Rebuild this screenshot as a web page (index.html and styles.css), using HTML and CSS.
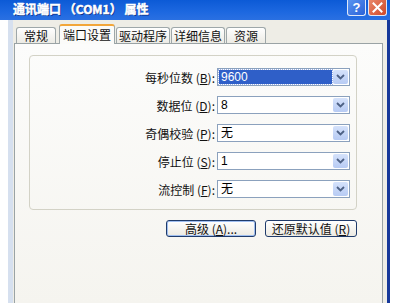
FILE: index.html
```html
<!DOCTYPE html>
<html>
<head>
<meta charset="utf-8">
<link rel="stylesheet" href="styles.css">
</head>
<body>
<div class="titlebar">
  <span class="title">通讯端口 （COM1） 属性</span>
  <div class="tbtns">
    <span class="tb help">?</span>
    <span class="tb close"><svg width="11" height="11" viewBox="0 0 11 11"><path d="M1.5 1.5 L9.5 9.5 M9.5 1.5 L1.5 9.5" stroke="#fff" stroke-width="2" stroke-linecap="square"/></svg></span>
  </div>
</div>
<div class="frame">
  <div class="content">
    <div class="tabs">
      <span class="tab t2">常规</span>
      <span class="tab active">端口设置</span>
      <span class="tab">驱动程序</span>
      <span class="tab">详细信息</span>
      <span class="tab t2">资源</span>
    </div>
    <div class="panel">
      <div class="group">
        <div class="row"><label>每秒位数 (<u>B</u>):</label><div class="combo"><span class="val sel">9600</span><span class="drop"><svg width="9" height="6" viewBox="0 0 9 6"><path d="M1 1 L4.5 4.5 L8 1" stroke="#4d6185" stroke-width="1.8" fill="none"/></svg></span></div></div>
        <div class="row"><label>数据位 (<u>D</u>):</label><div class="combo"><span class="val">8</span><span class="drop"><svg width="9" height="6" viewBox="0 0 9 6"><path d="M1 1 L4.5 4.5 L8 1" stroke="#4d6185" stroke-width="1.8" fill="none"/></svg></span></div></div>
        <div class="row"><label>奇偶校验 (<u>P</u>):</label><div class="combo"><span class="val">无</span><span class="drop"><svg width="9" height="6" viewBox="0 0 9 6"><path d="M1 1 L4.5 4.5 L8 1" stroke="#4d6185" stroke-width="1.8" fill="none"/></svg></span></div></div>
        <div class="row"><label>停止位 (<u>S</u>):</label><div class="combo"><span class="val">1</span><span class="drop"><svg width="9" height="6" viewBox="0 0 9 6"><path d="M1 1 L4.5 4.5 L8 1" stroke="#4d6185" stroke-width="1.8" fill="none"/></svg></span></div></div>
        <div class="row"><label>流控制 (<u>F</u>):</label><div class="combo"><span class="val">无</span><span class="drop"><svg width="9" height="6" viewBox="0 0 9 6"><path d="M1 1 L4.5 4.5 L8 1" stroke="#4d6185" stroke-width="1.8" fill="none"/></svg></span></div></div>
      </div>
      <div class="buttons">
        <button class="btn adv">高级 (<u>A</u>)...</button>
        <button class="btn def">还原默认值 (<u>R</u>)</button>
      </div>
    </div>
  </div>
</div>
</body>
</html>
```
FILE: styles.css
```css
html, body {
  margin: 0;
  padding: 0;
  background: #ffffff;
  width: 397px;
  height: 303px;
  overflow: hidden;
  font-family: "Noto Sans CJK SC", "DejaVu Sans", sans-serif;
  font-size: 12px;
  color: #000;
}
.titlebar {
  width: 390px;
  height: 20px;
  background: linear-gradient(to bottom, #0c5ad6 0%, #1d68e0 60%, #2a70e2 100%);
  display: flex;
  align-items: flex-start;
  justify-content: space-between;
}
.title {
  color: #fff;
  font-weight: bold;
  font-size: 12px;
  line-height: 18px;
  margin-left: 13px;
  -webkit-text-stroke: 0.5px #fff;
  text-shadow: 1px 1px 0 #0a2c80;
}
.tbtns {
  display: flex;
  gap: 2px;
  margin-right: 3px;
}
.tb {
  width: 19px;
  height: 16px;
  box-sizing: border-box;
  border: 1px solid #dfe8f8;
  border-top: none;
  border-radius: 0 0 3px 3px;
  display: flex;
  align-items: center;
  justify-content: center;
  color: #fff;
  font-weight: bold;
  font-family: "Liberation Sans", sans-serif;
  font-size: 13px;
}
.help {
  background: linear-gradient(135deg, #5a94f0, #2a62d8);
}
.close {
  background: linear-gradient(135deg, #e9876a, #d0492a);
}
.frame {
  margin-left: 8px;
  width: 382px;
  height: 283px;
  box-sizing: border-box;
  border-left: 5px solid #d6e0ef;
  border-right: 3px solid #16389a;
  background: #eeede6;
}
.content {
  padding: 4px 4px 0 1px;
  height: 100%;
  box-sizing: border-box;
  display: flex;
  flex-direction: column;
}
.tabs {
  display: flex;
  align-items: flex-end;
  padding-left: 2px;
  height: 19px;
  position: relative;
  z-index: 1;
}
.tab {
  height: 16px;
  box-sizing: border-box;
  border: 1px solid #9ea7a9;
  border-bottom: none;
  border-radius: 3px 3px 0 0;
  background: linear-gradient(to bottom, #fff, #ecebe5);
  padding: 0 2px;
  line-height: 15px;
  font-size: 12px;
  margin-right: 1px;
  color: #111;
}
.tab.t2 { width: 40px; padding: 0 0 0 7px; }
.tab.active {
  height: 20px;
  margin-bottom: -1px;
  background: #fbfbf9;
  border-top: 2px solid #f2a63a;
  line-height: 17px;
  padding: 0 3px;
  margin-left: 2px;
}
.panel {
  flex: 1;
  border: 1px solid #9aa3a5;
  border-bottom: none;
  background: linear-gradient(to bottom, #fcfcfb, #f5f4ef);
  padding: 11px 0 0 14px;
}
.group {
  width: 328px;
  height: 155px;
  box-sizing: border-box;
  border: 1px solid #d3d2c6;
  border-radius: 4px;
  padding-top: 12px;
  display: flex;
  flex-direction: column;
  gap: 10px;
}
.row {
  display: flex;
  align-items: center;
  height: 18px;
}
.row label {
  width: 185px;
  text-align: right;
  padding-right: 2px;
  font-size: 12px;
  color: #111;
  white-space: nowrap;
}
.combo {
  width: 133px;
  height: 18px;
  box-sizing: border-box;
  border: 1px solid #8ba1bd;
  background: #fff;
  display: flex;
  align-items: center;
  padding: 1px;
}
.val {
  flex: 1;
  height: 14px;
  line-height: 14px;
  padding-left: 2px;
  font-size: 12px;
  font-family: "Liberation Sans", "Noto Sans CJK SC", sans-serif;
}
.val.sel {
  background: #2f5fc8;
  color: #fff;
  margin-right: 1px;
  outline: 1px dotted #9fb4e6;
}
.drop {
  width: 15px;
  height: 14px;
  background: linear-gradient(to bottom, #d5e2fb, #b7cbf4);
  border-radius: 2px;
  display: flex;
  align-items: center;
  justify-content: center;
}
.buttons {
  display: flex;
  gap: 9px;
  width: 328px;
  justify-content: flex-end;
  margin-top: 10px;
}
.btn {
  height: 17px;
  box-sizing: border-box;
  border: 1px solid #1f3b6b;
  border-radius: 3px;
  background: linear-gradient(to bottom, #ffffff, #eceae2);
  font-family: "Noto Sans CJK SC", sans-serif;
  font-size: 12px;
  line-height: 14px;
  padding: 0;
  color: #111;
}
.btn.adv { width: 90px; box-shadow: inset 0 0 0 1px #9fbef0; }
.btn.def { width: 92px; }
```
